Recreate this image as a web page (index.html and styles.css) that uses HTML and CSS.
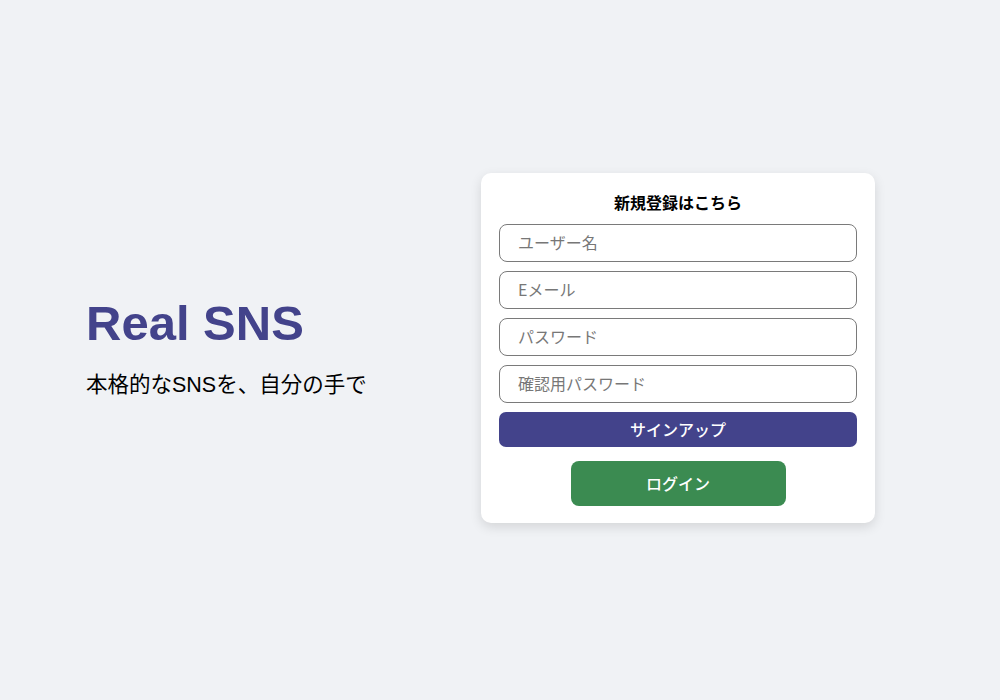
FILE: index.html
```html
<!DOCTYPE html>
<html lang="ja">
<head>
<meta charset="utf-8">
<title>Real SNS</title>
<link rel="stylesheet" href="styles.css">
</head>
<body>
<div class="page">
  <div class="intro">
    <h1 class="logo">Real SNS</h1>
    <p class="tagline">本格的なSNSを、自分の手で</p>
  </div>
  <form class="card">
    <p class="card-title">新規登録はこちら</p>
    <input class="field" type="text" placeholder="ユーザー名">
    <input class="field" type="email" placeholder="Eメール">
    <input class="field" type="password" placeholder="パスワード">
    <input class="field" type="password" placeholder="確認用パスワード">
    <button class="btn-signup" type="button">サインアップ</button>
    <button class="btn-login" type="button">ログイン</button>
  </form>
</div>
</body>
</html>
```

FILE: styles.css
```css
* { box-sizing: border-box; }
html, body { margin: 0; padding: 0; }
body {
  background: #f0f2f5;
  font-family: "Liberation Sans", "Noto Sans CJK JP", sans-serif;
  color: #000;
}
.page {
  display: flex;
  align-items: center;
  height: 700px;
  padding: 0 0 5px 86px;
}
.intro {
  width: 395px;
  padding-bottom: 1px;
}
.logo {
  margin: 0;
  font-size: 49px;
  font-weight: 700;
  line-height: 56px;
  color: #43438b;
  font-family: "Liberation Sans", Arial, sans-serif;
}
.tagline {
  margin: 20px 0 0;
  font-size: 21.5px;
  line-height: 28px;
  font-family: "Liberation Sans", "Noto Sans CJK JP", sans-serif;
}
.card {
  width: 394px;
  background: #fff;
  border-radius: 10px;
  box-shadow: 0 4px 12px rgba(0, 0, 0, 0.12);
  padding: 18px 18px 17px;
  display: flex;
  flex-direction: column;
  gap: 9px;
  font-family: "Noto Sans CJK JP", sans-serif;
}
.card-title {
  margin: 0 0 2px;
  text-align: center;
  font-size: 16px;
  font-weight: 700;
  line-height: 22px;
}
.field {
  height: 38px;
  width: 100%;
  border: 1px solid #7a7a7a;
  border-radius: 8px;
  padding: 0 18px 2px;
  font-size: 16px;
  font-family: "Noto Sans CJK JP", sans-serif;
  background: #fff;
  outline: none;
}
.field::placeholder { color: #777; }
.btn-signup {
  height: 35px;
  width: 100%;
  border: none;
  border-radius: 7px;
  background: #43438b;
  color: #fff;
  font-size: 16px;
  font-weight: 500;
  font-family: "Noto Sans CJK JP", sans-serif;
}
.btn-login {
  margin-top: 5px;
  align-self: center;
  width: 215px;
  height: 45px;
  border: none;
  border-radius: 8px;
  background: #3b8b51;
  color: #fff;
  font-size: 16px;
  font-weight: 500;
  font-family: "Noto Sans CJK JP", sans-serif;
}
```
